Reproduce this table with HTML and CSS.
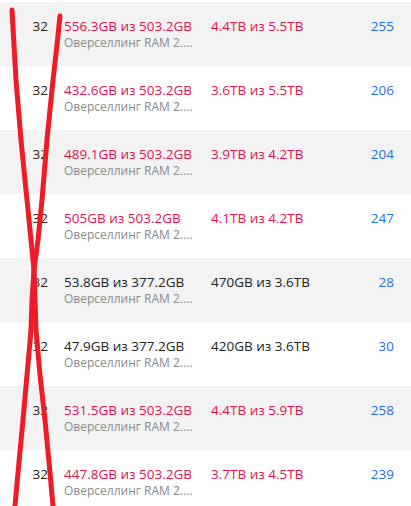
FILE: index.html
```html
<!DOCTYPE html>
<html lang="ru">
<head>
<meta charset="utf-8">
<link rel="stylesheet" href="styles.css">
</head>
<body>
<div class="page">
  <div class="table">
    <div class="row alt">
      <div class="c-num">32</div>
      <div class="c-ram"><div class="main over">556.3GB из 503.2GB</div><div class="sub">Оверселлинг RAM 2....</div></div>
      <div class="c-disk over">4.4TB из 5.5TB</div>
      <div class="c-cnt">255</div>
    </div>
    <div class="row">
      <div class="c-num">32</div>
      <div class="c-ram"><div class="main over">432.6GB из 503.2GB</div><div class="sub">Оверселлинг RAM 2....</div></div>
      <div class="c-disk over">3.6TB из 5.5TB</div>
      <div class="c-cnt">206</div>
    </div>
    <div class="row alt">
      <div class="c-num">32</div>
      <div class="c-ram"><div class="main over">489.1GB из 503.2GB</div><div class="sub">Оверселлинг RAM 2....</div></div>
      <div class="c-disk over">3.9TB из 4.2TB</div>
      <div class="c-cnt">204</div>
    </div>
    <div class="row">
      <div class="c-num">32</div>
      <div class="c-ram"><div class="main over">505GB из 503.2GB</div><div class="sub">Оверселлинг RAM 2....</div></div>
      <div class="c-disk over">4.1TB из 4.2TB</div>
      <div class="c-cnt">247</div>
    </div>
    <div class="row alt">
      <div class="c-num">32</div>
      <div class="c-ram"><div class="main">53.8GB из 377.2GB</div><div class="sub">Оверселлинг RAM 2....</div></div>
      <div class="c-disk">470GB из 3.6TB</div>
      <div class="c-cnt">28</div>
    </div>
    <div class="row">
      <div class="c-num">32</div>
      <div class="c-ram"><div class="main">47.9GB из 377.2GB</div><div class="sub">Оверселлинг RAM 2....</div></div>
      <div class="c-disk">420GB из 3.6TB</div>
      <div class="c-cnt">30</div>
    </div>
    <div class="row alt">
      <div class="c-num">32</div>
      <div class="c-ram"><div class="main over">531.5GB из 503.2GB</div><div class="sub">Оверселлинг RAM 2....</div></div>
      <div class="c-disk over">4.4TB из 5.9TB</div>
      <div class="c-cnt">258</div>
    </div>
    <div class="row">
      <div class="c-num">32</div>
      <div class="c-ram"><div class="main over">447.8GB из 503.2GB</div><div class="sub">Оверселлинг RAM 2....</div></div>
      <div class="c-disk over">3.7TB из 4.5TB</div>
      <div class="c-cnt">239</div>
    </div>
  </div>
  <svg class="scribble" width="411" height="506" viewBox="0 0 411 506">
    <polyline points="12,10 14,45 16,80 21,140 27,200 31,240 34,270 35,300 36,330 40,375 45,420 49,462 53,506"/>
    <polyline points="60,16 57,45 53,80 47,140 42,200 38,240 34,270 32,300 31,330 27,375 23,420 19,462 15,506"/>
  </svg>
</div>
</body>
</html>
```

FILE: styles.css
```css
html, body {
  margin: 0;
  padding: 0;
  background: #ffffff;
}
body {
  font-family: "Open Sans", "Noto Sans", sans-serif;
  color: #222222;
  width: 411px;
  height: 506px;
  overflow: hidden;
}
.page {
  position: relative;
  width: 411px;
  height: 506px;
  overflow: hidden;
}
.table {
  padding-top: 2px;
}
.row {
  display: grid;
  grid-template-columns: 48px 131px 1fr auto;
  column-gap: 16px;
  align-items: start;
  height: 64px;
  box-sizing: border-box;
  padding: 15px 17px 0 0;
  background: #ffffff;
}
.row.alt {
  background: #f3f3f3;
}
.c-num {
  text-align: right;
  font-size: 13.5px;
  line-height: 18px;
  color: #222222;
}
.c-ram {
  white-space: nowrap;
  overflow: hidden;
}
.main {
  font-size: 13.5px;
  line-height: 18px;
  color: #222222;
}
.sub {
  font-size: 12px;
  line-height: 16px;
  color: #8a8a8a;
}
.c-disk {
  font-size: 13.5px;
  line-height: 18px;
  white-space: nowrap;
  color: #222222;
}
.over {
  color: #e0124f;
}
.c-cnt {
  font-size: 13.5px;
  line-height: 18px;
  text-align: right;
  color: #1e6fe0;
}
.scribble {
  position: absolute;
  left: 0;
  top: 0;
  pointer-events: none;
}
.scribble polyline {
  fill: none;
  stroke: #ee1c25;
  stroke-width: 5;
  stroke-linecap: round;
  stroke-linejoin: round;
}
```
